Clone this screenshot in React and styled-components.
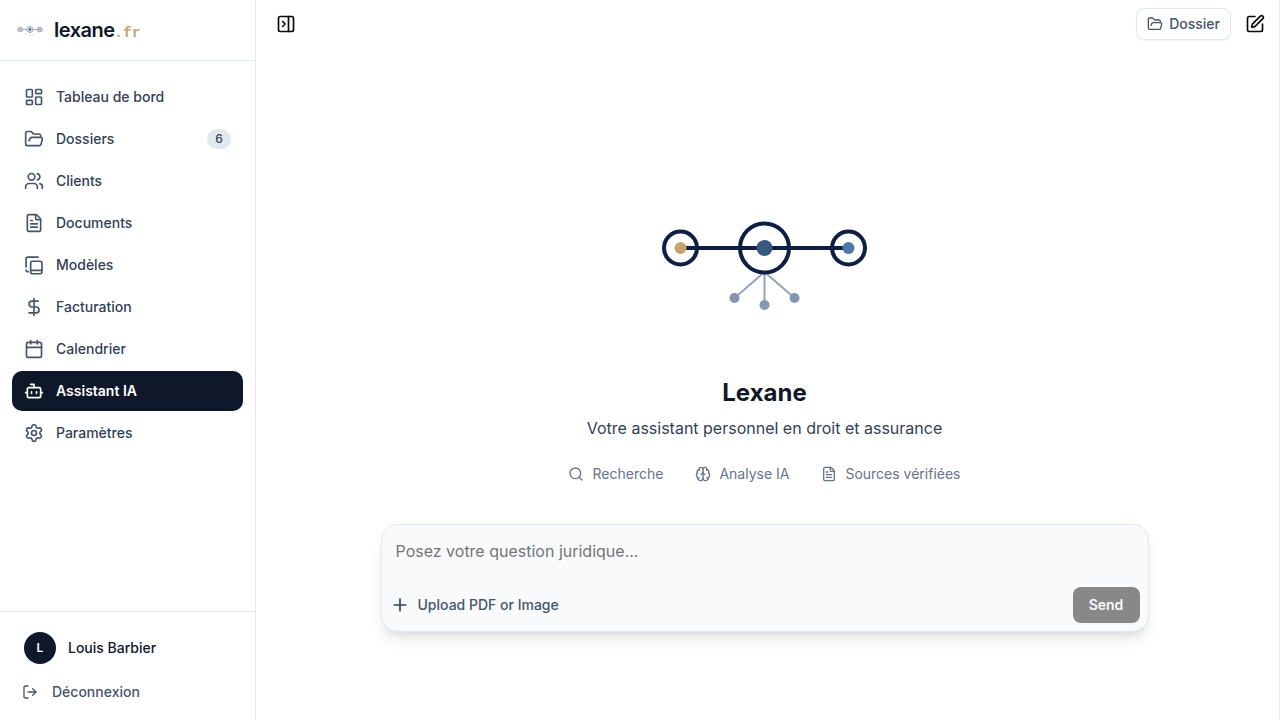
import React from 'react';
import styled, { createGlobalStyle } from 'styled-components';
import {
  LayoutDashboard,
  FolderOpen,
  Users,
  FileText,
  DollarSign,
  Calendar,
  Bot,
  Settings,
  LogOut,
  PanelRightClose,
  SquarePen,
  Search,
  Brain,
  Plus,
} from 'lucide-react';

const GlobalStyle = createGlobalStyle`
  html, body {
    margin: 0;
    padding: 0;
    height: 100%;
    background: #fff;
    font-family: Inter, "Noto Sans", sans-serif;
    overflow: hidden;
  }
  * { box-sizing: border-box; }
`;

const Page = styled.div`
  display: flex;
  width: 1280px;
  height: 720px;
`;

const Sidebar = styled.aside`
  width: 256px;
  flex: none;
  display: flex;
  flex-direction: column;
  border-right: 1px solid #e2e8f0;
`;

const Brand = styled.div`
  height: 61px;
  flex: none;
  display: flex;
  align-items: center;
  gap: 11px;
  padding-left: 17px;
  border-bottom: 1px solid #e2e8f0;
`;

const BrandName = styled.div`
  font-size: 20px;
  font-weight: 600;
  letter-spacing: -0.5px;
  color: #0f172a;
`;

const BrandTld = styled.span`
  font-family: "Liberation Mono", monospace;
  font-size: 14px;
  font-weight: 700;
  letter-spacing: 0.3px;
  color: #c5a46d;
`;

const Nav = styled.nav`
  flex: 1;
  display: flex;
  flex-direction: column;
  gap: 2px;
  padding: 16px 12px;
`;

const NavItem = styled.a`
  height: 40px;
  display: flex;
  align-items: center;
  gap: 12px;
  padding: 0 12px;
  border-radius: 10px;
  font-size: 14px;
  line-height: 20px;
  font-weight: ${(p) => (p.$active ? 600 : 500)};
  color: ${(p) => (p.$active ? '#fff' : '#334155')};
  background: ${(p) => (p.$active ? '#0f172a' : 'transparent')};

  svg {
    color: ${(p) => (p.$active ? '#fff' : '#475569')};
    flex: none;
  }
`;

const NavLabel = styled.span`
  flex: 1;
`;

const Count = styled.span`
  width: 24px;
  height: 20px;
  display: flex;
  align-items: center;
  justify-content: center;
  border-radius: 10px;
  background: #e2e8f0;
  color: #334155;
  font-size: 12px;
  line-height: 16px;
  font-weight: 500;
`;

const SideFooter = styled.div`
  flex: none;
  height: 109px;
  padding: 20px 12px 0;
  border-top: 1px solid #e2e8f0;
`;

const UserRow = styled.div`
  display: flex;
  align-items: center;
  gap: 12px;
  padding-left: 12px;
`;

const Avatar = styled.div`
  width: 32px;
  height: 32px;
  border-radius: 50%;
  display: flex;
  align-items: center;
  justify-content: center;
  background: #0f172a;
  color: #fff;
  font-size: 12px;
  line-height: 16px;
  font-weight: 600;
`;

const UserName = styled.span`
  font-size: 14px;
  line-height: 20px;
  font-weight: 500;
  color: #0f172a;
`;

const Logout = styled.a`
  display: flex;
  align-items: center;
  gap: 14px;
  margin-top: 18px;
  padding-left: 10px;
  font-size: 14px;
  line-height: 20px;
  font-weight: 500;
  color: #475569;

  svg {
    color: #475569;
  }
`;

const Main = styled.main`
  flex: 1;
  min-width: 0;
  display: flex;
  flex-direction: column;
  padding-right: 6px;
  border-right: 1px solid #eeeeee;
`;

const TopBar = styled.header`
  flex: none;
  height: 48px;
  display: flex;
  align-items: center;
  justify-content: space-between;
  padding: 0 8px 0 20px;
`;

const TopActions = styled.div`
  display: flex;
  align-items: center;
  gap: 14px;
`;

const IconButton = styled.button`
  display: flex;
  padding: 0;
  border: 0;
  background: none;
  color: #0a0a0a;
`;

const DossierButton = styled.button`
  height: 32px;
  display: flex;
  align-items: center;
  gap: 6px;
  padding: 0 10px;
  border: 1px solid #e2e8f0;
  border-radius: 8px;
  background: #fff;
  box-shadow: 0 1px 2px rgba(15, 23, 42, 0.05);
  font-family: inherit;
  font-size: 14px;
  line-height: 20px;
  font-weight: 500;
  color: #475569;
`;

const Center = styled.div`
  flex: 1;
  display: flex;
  flex-direction: column;
  align-items: center;
  padding-top: 162px;
`;

const Title = styled.h1`
  margin: 57px 0 0;
  font-size: 24px;
  line-height: 32px;
  font-weight: 700;
  color: #0f172a;
`;

const Subtitle = styled.p`
  margin: 7px 0 0;
  font-size: 16px;
  line-height: 24px;
  color: #334155;
`;

const Features = styled.div`
  display: flex;
  gap: 32px;
  margin-top: 24px;
`;

const Feature = styled.span`
  display: flex;
  align-items: center;
  gap: 8px;
  font-size: 14px;
  line-height: 20px;
  color: #64748b;
`;

const Composer = styled.div`
  width: 768px;
  height: 108px;
  margin-top: 40px;
  display: flex;
  flex-direction: column;
  justify-content: space-between;
  padding: 14px 8px 8px 14px;
  border: 1px solid #e2e8f0;
  border-radius: 16px;
  background: #f8fafc;
  box-shadow: 0 10px 15px -3px rgba(0, 0, 0, 0.1), 0 4px 6px -4px rgba(0, 0, 0, 0.1);
`;

const Placeholder = styled.div`
  font-size: 16px;
  line-height: 24px;
  color: #757575;
`;

const ComposerRow = styled.div`
  display: flex;
  align-items: center;
  justify-content: space-between;
  margin-left: -6px;
`;

const Upload = styled.button`
  display: flex;
  align-items: center;
  gap: 8px;
  padding: 0;
  border: 0;
  background: none;
  font-family: inherit;
  font-size: 14px;
  line-height: 20px;
  font-weight: 500;
  color: #475569;

  svg {
    color: #334155;
  }
`;

const Send = styled.button`
  width: 67px;
  height: 36px;
  border: 0;
  border-radius: 8px;
  background: #888888;
  font-family: inherit;
  font-size: 14px;
  line-height: 20px;
  font-weight: 600;
  color: #f8fafc;
`;

// lucide's book-copy leans the other way, so this one is drawn by hand
function TemplatesIcon({ size = 20 }) {
  return (
    <svg
      width={size}
      height={size}
      viewBox="0 0 24 24"
      fill="none"
      stroke="currentColor"
      strokeWidth="2"
      strokeLinecap="round"
      strokeLinejoin="round"
    >
      <path d="M17 2.5H4.5a2 2 0 0 0-2 2v10" />
      <path d="M2.5 18v.5a1.5 1.5 0 0 0 1.5 1.5h1" />
      <path d="M10 7.5h9.5a2 2 0 0 1 2 2v11a2 2 0 0 1-2 2H10a2 2 0 0 1-2-2v-11a2 2 0 0 1 2-2z" />
      <path d="M8 18.5h13.5" />
    </svg>
  );
}

const navItems = [
  { label: 'Tableau de bord', icon: LayoutDashboard },
  { label: 'Dossiers', icon: FolderOpen, count: 6 },
  { label: 'Clients', icon: Users },
  { label: 'Documents', icon: FileText },
  { label: 'Modèles', icon: TemplatesIcon },
  { label: 'Facturation', icon: DollarSign },
  { label: 'Calendrier', icon: Calendar },
  { label: 'Assistant IA', icon: Bot, active: true },
  { label: 'Paramètres', icon: Settings },
];

const features = [
  { label: 'Recherche', icon: Search },
  { label: 'Analyse IA', icon: Brain },
  { label: 'Sources vérifiées', icon: FileText },
];

function HeroMark() {
  return (
    <svg width="220" height="110" viewBox="1.5 0 220 110" style={{ display: 'block' }}>
      <line x1="27" y1="38" x2="195" y2="38" stroke="#0f1f44" strokeWidth="4" />
      <line x1="111" y1="62" x2="81" y2="88" stroke="#94a3b8" strokeWidth="2" />
      <line x1="111" y1="62" x2="111" y2="95" stroke="#94a3b8" strokeWidth="2" />
      <line x1="111" y1="62" x2="141" y2="88" stroke="#94a3b8" strokeWidth="2" />
      <circle cx="81" cy="88" r="5" fill="#8496b0" />
      <circle cx="111" cy="95" r="5" fill="#8496b0" />
      <circle cx="141" cy="88" r="5" fill="#8496b0" />
      <circle cx="27" cy="38" r="16.5" fill="none" stroke="#0f1f44" strokeWidth="4" />
      <circle cx="111" cy="38" r="24.5" fill="none" stroke="#0f1f44" strokeWidth="4" />
      <circle cx="195" cy="38" r="16.5" fill="none" stroke="#0f1f44" strokeWidth="4" />
      <circle cx="27" cy="38" r="6" fill="#c5a46d" />
      <circle cx="111" cy="38" r="8" fill="#38587f" />
      <circle cx="195" cy="38" r="6" fill="#4a7aa8" />
    </svg>
  );
}

// the small one next to the name, drawn pale and blurry like in the sidebar
function BrandMark() {
  return (
    <svg width="26" height="16" viewBox="0 0 26 16">
      <line x1="3" y1="7.5" x2="23" y2="7.5" stroke="#8f98a8" strokeWidth="0.8" />
      <circle cx="3.2" cy="7.5" r="2.4" fill="#c5c3bc" stroke="#9aa2b0" strokeWidth="0.8" />
      <circle cx="13" cy="7.5" r="3" fill="#dfe3ea" stroke="#8f98a8" strokeWidth="0.8" />
      <circle cx="13" cy="7.5" r="1.2" fill="#3b5d8a" />
      <circle cx="22.8" cy="7.5" r="2.4" fill="#b8c3d2" stroke="#9aa2b0" strokeWidth="0.8" />
      <circle cx="9.5" cy="12.5" r="0.6" fill="#a8b3c4" />
      <circle cx="13" cy="13.5" r="0.6" fill="#a8b3c4" />
      <circle cx="16.5" cy="12.5" r="0.6" fill="#a8b3c4" />
    </svg>
  );
}

export default function App() {
  return (
    <Page>
      <GlobalStyle />
      <Sidebar>
        <Brand>
          <BrandMark />
          <BrandName>
            lexane<BrandTld>.fr</BrandTld>
          </BrandName>
        </Brand>
        <Nav>
          {navItems.map((item) => (
            <NavItem key={item.label} $active={item.active}>
              <item.icon size={20} />
              <NavLabel>{item.label}</NavLabel>
              {item.count && <Count>{item.count}</Count>}
            </NavItem>
          ))}
        </Nav>
        <SideFooter>
          <UserRow>
            <Avatar>L</Avatar>
            <UserName>Louis Barbier</UserName>
          </UserRow>
          <Logout>
            <LogOut size={16} />
            Déconnexion
          </Logout>
        </SideFooter>
      </Sidebar>
      <Main>
        <TopBar>
          <IconButton>
            <PanelRightClose size={20} />
          </IconButton>
          <TopActions>
            <DossierButton>
              <FolderOpen size={16} />
              Dossier
            </DossierButton>
            <IconButton>
              <SquarePen size={20} />
            </IconButton>
          </TopActions>
        </TopBar>
        <Center>
          <HeroMark />
          <Title>Lexane</Title>
          <Subtitle>Votre assistant personnel en droit et assurance</Subtitle>
          <Features>
            {features.map((f) => (
              <Feature key={f.label}>
                <f.icon size={16} />
                {f.label}
              </Feature>
            ))}
          </Features>
          <Composer>
            <Placeholder>Posez votre question juridique...</Placeholder>
            <ComposerRow>
              <Upload>
                <Plus size={20} />
                Upload PDF or Image
              </Upload>
              <Send>Send</Send>
            </ComposerRow>
          </Composer>
        </Center>
      </Main>
    </Page>
  );
}
